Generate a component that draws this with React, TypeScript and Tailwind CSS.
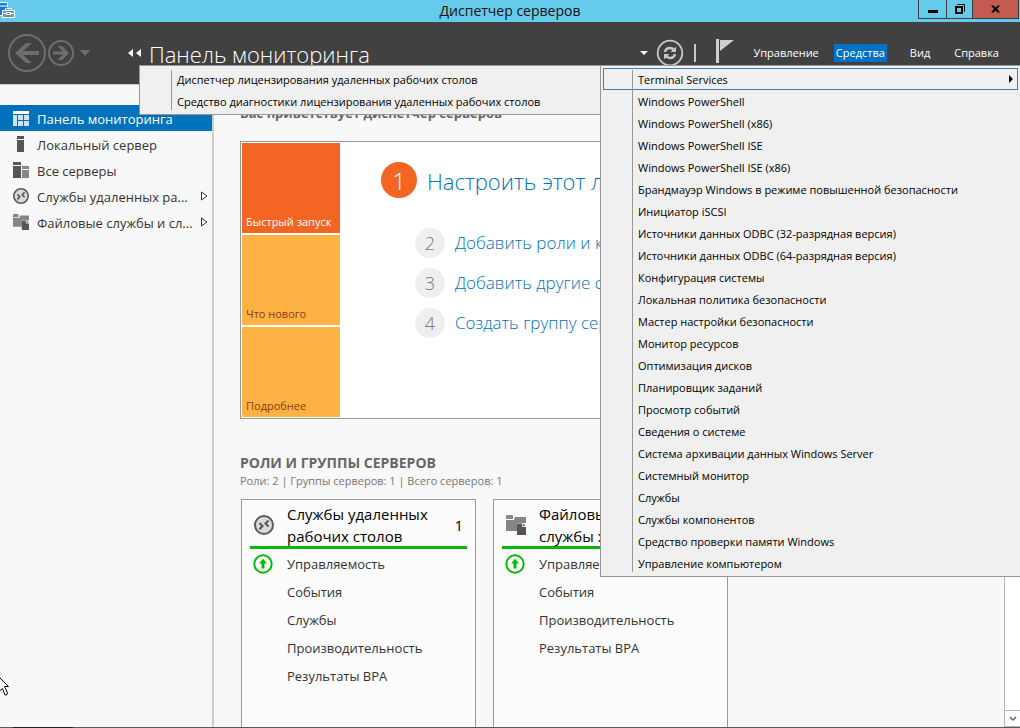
import type { ReactNode } from 'react'

const tools = [
  'Terminal Services',
  'Windows PowerShell',
  'Windows PowerShell (x86)',
  'Windows PowerShell ISE',
  'Windows PowerShell ISE (x86)',
  'Брандмауэр Windows в режиме повышенной безопасности',
  'Инициатор iSCSI',
  'Источники данных ODBC (32-разрядная версия)',
  'Источники данных ODBC (64-разрядная версия)',
  'Конфигурация системы',
  'Локальная политика безопасности',
  'Мастер настройки безопасности',
  'Монитор ресурсов',
  'Оптимизация дисков',
  'Планировщик заданий',
  'Просмотр событий',
  'Сведения о системе',
  'Система архивации данных Windows Server',
  'Системный монитор',
  'Службы',
  'Службы компонентов',
  'Средство проверки памяти Windows',
  'Управление компьютером',
]

const terminalServices = [
  'Диспетчер лицензирования удаленных рабочих столов',
  'Средство диагностики лицензирования удаленных рабочих столов',
]

function AppIcon() {
  return (
    <svg width="16" height="18" viewBox="0 0 16 18" className="block">
      <path d="M0 2h7v13H0z" fill="#1a7fd4" />
      <path d="M0 2.500h7.500v4.500M0 6h7M0 15.500h2" stroke="#fff" fill="none" />
      <path d="M2.500 10.500h12v7h-12z" fill="#6f93a8" stroke="#fff" />
      <path d="M5.500 10.500v-2h6v2M2.500 13.500h4m4 0h4M6.500 12.500h4v2h-4z" fill="none" stroke="#fff" />
    </svg>
  )
}

function DashboardIcon() {
  return (
    <svg width="16" height="15" viewBox="0 0 16 15">
      <path d="M0 0h16v3H0z" fill="#fff" />
      <path d="M0 4h4v11H0zM5 4h5v5H5zM11 4h5v5h-5zM5 10h5v5H5zM11 10h5v5h-5z" fill="#cfe3f3" />
    </svg>
  )
}

function ServerIcon() {
  return (
    <svg width="16" height="16" viewBox="0 0 16 16">
      <path d="M4 0h7v3H4zM4 4h7v12H4z" fill="#555" />
    </svg>
  )
}

function ServersIcon() {
  return (
    <svg width="16" height="16" viewBox="0 0 16 16">
      <path d="M0 0h8v3H0zM0 4h8v12H0z" fill="#555" />
      <path d="M9 4h7v3H9zM9 8h7v8H9z" fill="#858585" />
    </svg>
  )
}

function RemoteIcon({ size }: { size: number }) {
  return (
    <svg width={size} height={size} viewBox="0 0 20 20" className="shrink-0">
      <circle cx="10" cy="10" r="9" fill="#dadada" stroke="#5a5a5a" strokeWidth="2" />
      <path d="M5.500 8l3 3-3 3.200M14.500 5.500l-3 3 3 3" fill="none" stroke="#555" strokeWidth="2" />
    </svg>
  )
}

function FolderIcon({ size }: { size: number }) {
  return (
    <svg width={size} height={size} viewBox="0 0 20 20" className="shrink-0">
      <path d="M0 1l1-1h5l1 1v3H0z" fill="#858585" />
      <path d="M0 5h8l1-3h11v6h-9v8H0z" fill="#858585" />
      <path d="M11 8.500h6l3 3V20h-9z" fill="#555" />
      <path d="M16.500 8.500v3H20" fill="none" stroke="#eee" />
    </svg>
  )
}

function UpIcon() {
  return (
    <svg width="20" height="20" viewBox="0 0 20 20" className="shrink-0">
      <circle cx="10" cy="10" r="8.700" fill="#fff" stroke="#0b0" strokeWidth="2" />
      <path d="M10 4.800l4 4.700h-2.500v5h-3v-5H6z" fill="#0b0" />
    </svg>
  )
}

function TitleBar() {
  return (
    <div className="relative flex h-[22px] shrink-0 items-center justify-center bg-[#66caea] text-sm text-[#111]">
      <div className="absolute left-0 top-0">
        <AppIcon />
      </div>
      <h1>Диспетчер серверов</h1>
      <div className="absolute right-px top-0 flex h-[19px] border border-t-0 border-[#3c3c3c]">
        <button aria-label="Свернуть" className="flex w-7 items-center justify-center border-r border-[#3c3c3c]">
          <svg width="10" height="10" viewBox="0 0 10 10">
            <path d="M0 6h10v3H0z" />
          </svg>
        </button>
        <button aria-label="Восстановить" className="flex w-[26px] items-center justify-center border-r border-[#3c3c3c]">
          <svg width="10" height="10" viewBox="0 0 10 10">
            <path d="M2.500 .5h7v7" fill="none" stroke="#000" />
            <path d="M1 3h6v6H1z" fill="none" stroke="#000" strokeWidth="2" />
          </svg>
        </button>
        <button aria-label="Закрыть" className="flex w-[45px] items-center justify-center bg-[#c35b51]">
          <svg width="9" height="8" viewBox="0 0 10 8">
            <path d="M0 0h3l2 2.500L7 0h3L6.700 4 10 8H7L5 5.500 3 8H0l3.300-4z" />
          </svg>
        </button>
      </div>
    </div>
  )
}

function Header() {
  return (
    <header className="flex h-[63px] shrink-0 items-center border-b border-[#c8c8c8] bg-[#414141] pl-2 text-white">
      <button aria-label="Назад">
        <svg width="38" height="38" viewBox="0 0 38 38" fill="none" stroke="#6e6e6e">
          <circle cx="19" cy="19" r="18" strokeWidth="2" />
          <path d="M31 19H10" strokeWidth="4" />
          <path d="M7 19l11-10h6L13 19l11 10h-6z" fill="#6e6e6e" stroke="none" />
        </svg>
      </button>
      <button aria-label="Вперед" className="ml-0.5">
        <svg width="26" height="26" viewBox="0 0 26 26" fill="none" stroke="#6e6e6e">
          <circle cx="13" cy="13" r="12" strokeWidth="2" />
          <path d="M5 13h14" strokeWidth="3" />
          <path d="M21 13l-7 7h-4.500l7-7-7-7H14z" fill="#6e6e6e" stroke="none" />
        </svg>
      </button>
      <button aria-label="Журнал" className="ml-1.5">
        <svg width="10" height="6" viewBox="0 0 10 6">
          <path d="M0 0h10L5 6z" fill="#6e6e6e" />
        </svg>
      </button>
      <svg width="13" height="8" viewBox="0 0 13 8" className="ml-[38px]">
        <path d="M5 0v8L0 4zM13 0v8L8 4z" fill="#fff" />
      </svg>
      <h2 className="ml-2 pt-0.5 text-[22px] font-light whitespace-nowrap">Панель мониторинга</h2>

      <div className="ml-auto flex items-center">
        <svg width="8" height="4" viewBox="0 0 8 4">
          <path d="M0 0h8L4 4z" fill="#fff" />
        </svg>
        <button aria-label="Обновить" className="ml-2">
          <svg width="28" height="28" viewBox="0 0 28 28" fill="none" stroke="#c8c8c8">
            <circle cx="14" cy="14" r="12.300" strokeWidth="1.800" />
            <path d="M9 13c.5-2.500 2.500-4 5-4 1.500 0 3 .7 4 2M19 15c-.5 2.500-2.500 4-5 4-1.500 0-3-.7-4-2" strokeWidth="2.500" />
            <path d="M20 7.500V13h-5.500zM8 20.500V15h5.500z" fill="#c8c8c8" stroke="none" />
          </svg>
        </button>
        <div className="ml-2.5 h-[18px] w-0.5 bg-[#c8c8c8]" />
        <button aria-label="Уведомления" className="ml-5 pb-1">
          <svg width="18" height="24" viewBox="0 0 18 24" fill="#d0d0d0">
            <path d="M0 0h3v24H0zM4 1h14L4 12z" />
          </svg>
        </button>
        <nav className="ml-[18px] flex pr-5 text-[11px] leading-[18px]">
          <button className="px-px">Управление</button>
          <button className="ml-3.5 bg-[#0072c6] px-[2px]">Средства</button>
          <button className="ml-[22px] px-px">Вид</button>
          <button className="ml-[22px] px-px">Справка</button>
        </nav>
      </div>
    </header>
  )
}

function NavItem({ icon, label, active, more }: { icon: ReactNode; label: string; active?: boolean; more?: boolean }) {
  return (
    <a
      href="#"
      className={
        active
          ? 'flex h-[26px] items-center bg-[#0072bc] pl-[13px] text-white'
          : 'flex h-[26px] items-center pl-[13px] text-[#333]'
      }
    >
      {icon}
      <span className="ml-2 pt-[3px] whitespace-nowrap">{label}</span>
      {more && (
        <svg width="8" height="10" viewBox="0 0 8 10" className="mr-1 ml-auto shrink-0">
          <path d="M1.500 1v8L7 5z" fill="#fff" stroke="#333" />
        </svg>
      )}
    </a>
  )
}

function Sidebar() {
  return (
    <aside className="w-[214px] shrink-0 border-r-2 border-[#cfcfcf] pt-5 text-[13px]">
      <NavItem active icon={<DashboardIcon />} label="Панель мониторинга" />
      <NavItem icon={<ServerIcon />} label="Локальный сервер" />
      <NavItem icon={<ServersIcon />} label="Все серверы" />
      <NavItem more icon={<RemoteIcon size={16} />} label="Службы удаленных ра..." />
      <NavItem more icon={<FolderIcon size={16} />} label="Файловые службы и сл..." />
    </aside>
  )
}

function Step({ n, label }: { n: number; label: string }) {
  return (
    <li className="flex h-10 items-center">
      <span className="flex size-[30px] items-center justify-center rounded-full bg-[#efefef] text-lg font-light text-[#777]">
        {n}
      </span>
      <a href="#" className="ml-2.5 text-[17px] font-light whitespace-nowrap text-[#0072bc]">
        {label}
      </a>
    </li>
  )
}

function Welcome() {
  return (
    <section className="mt-[18px] flex border border-[#999] bg-white p-px">
      <div className="flex w-[98px] shrink-0 flex-col gap-0.5 text-[11px] leading-4">
        <button className="flex h-[90px] items-end bg-[#f26522] px-1 pb-[3px] whitespace-nowrap text-white">Быстрый запуск</button>
        <button className="flex h-[90px] items-end bg-[#ffb244] px-1 pb-[3px] text-[#8b3a0e]">Что нового</button>
        <button className="flex h-[90px] items-end bg-[#ffb244] px-1 pb-[3px] text-[#8b3a0e]">Подробнее</button>
      </div>
      <div className="pt-[19px] pl-[41px]">
        <div className="flex items-center">
          <span className="flex size-9 items-center justify-center rounded-full bg-[#f26522] pt-0.5 text-2xl font-light text-white">1</span>
          <a href="#" className="ml-2.5 pt-0.5 text-[22px] leading-8 font-light whitespace-nowrap text-[#0072bc]">
            Настроить этот локальный сервер
          </a>
        </div>
        <ol className="mt-[25px] pl-[34px]">
          <Step n={2} label="Добавить роли и компоненты" />
          <Step n={3} label="Добавить другие серверы" />
          <Step n={4} label="Создать группу серверов" />
        </ol>
      </div>
    </section>
  )
}

function RoleCard({ icon, title, count, rows }: { icon: ReactNode; title: ReactNode; count: number; rows: string[] }) {
  return (
    <article className="w-[235px] shrink-0 border border-b-0 border-[#999] bg-[#fcfcfc] px-2">
      <div className="flex h-[49px] items-center border-b-3 border-[#0b0] px-1 pt-[3px] text-[15px] leading-[22px] text-black">
        {icon}
        <h4 className="ml-[13px] whitespace-nowrap">{title}</h4>
        <span className="ml-auto">{count}</span>
      </div>
      <ul className="pt-px text-[13px] text-[#333]">
        {rows.map((row, i) => (
          <li key={row} className="flex h-7 items-center pl-[3px]">
            <span className="w-[34px]">{i === 0 && <UpIcon />}</span>
            <a href="#" className="pt-px">{row}</a>
          </li>
        ))}
      </ul>
    </article>
  )
}

function MenuItem({ label, open }: { label: string; open?: boolean }) {
  return (
    <button
      role="menuitem"
      className={
        open
          ? 'flex h-[22px] w-full items-center border border-[#3c7fb1] pr-1 pl-[34px] text-left'
          : 'flex h-[22px] w-full items-center pl-[35px] text-left'
      }
    >
      <span className="pt-px whitespace-nowrap">{label}</span>
      {open && (
        <svg width="4" height="8" viewBox="0 0 4 8" className="ml-auto">
          <path d="M0 0l4 4-4 4z" />
        </svg>
      )}
    </button>
  )
}

function Menu({ label, className, children }: { label: string; className: string; children: ReactNode }) {
  return (
    <div role="menu" aria-label={label} className={`relative border border-[#979797] bg-[#f0f0f0] p-0.5 ${className}`}>
      {children}
      <div className="pointer-events-none absolute inset-y-1 left-[31px] w-px bg-[#979797]" />
    </div>
  )
}

export default function App() {
  return (
    <div className="relative flex h-screen flex-col overflow-hidden bg-[#f8f8f8] font-['Open_Sans','Noto_Sans',sans-serif]">
      <TitleBar />
      <Header />
      <div className="flex min-h-0 flex-1">
        <Sidebar />
        <main className="min-w-0 flex-1 overflow-hidden pt-[18px] pl-[26px]">
          <h3 className="text-[13px] leading-5 font-bold text-[#666]">Вас приветствует диспетчер серверов</h3>
          <Welcome />
          <h3 className="mt-[34px] text-sm font-bold text-[#666]">РОЛИ И ГРУППЫ СЕРВЕРОВ</h3>
          <p className="text-[11px] leading-4 text-[#777]">Роли: 2 | Группы серверов: 1 | Всего серверов: 1</p>
          <div className="mt-2.5 ml-px flex h-screen gap-[17px]">
            <RoleCard
              icon={<RemoteIcon size={20} />}
              title={<>Службы удаленных<br />рабочих столов</>}
              count={1}
              rows={['Управляемость', 'События', 'Службы', 'Производительность', 'Результаты BPA']}
            />
            <RoleCard
              icon={<FolderIcon size={20} />}
              title={<>Файловые службы и<br />службы хранилища</>}
              count={1}
              rows={['Управляемость', 'События', 'Производительность', 'Результаты BPA']}
            />
          </div>
        </main>
        <div className="flex w-4 shrink-0 flex-col justify-end border-l border-[#b5b5b5] bg-white">
          <button aria-label="Прокрутить вниз" className="flex h-[17px] items-center justify-center border-y border-[#b5b5b5]">
            <svg width="8" height="6" viewBox="0 0 8 6">
              <path d="M1 1l3 3 3-3" fill="none" stroke="#666" strokeWidth="1.500" />
            </svg>
          </button>
        </div>
      </div>
      <div className="h-px shrink-0 bg-[#5a5a5a] pl-[13px]">
        <div className="h-px w-[60px] bg-[#222]" />
      </div>

      {/* Open "Tools" menu with its submenu on the left */}
      <div className="absolute top-[65px] right-0 flex items-start text-[11px] leading-4 text-black">
        <Menu label="Terminal Services" className="w-[461px] border-r-0">
          {terminalServices.map((item) => (
            <MenuItem key={item} label={item} />
          ))}
        </Menu>
        <Menu label="Средства" className="w-[420px] border-r-0">
          {tools.map((item, i) => (
            <MenuItem key={item} label={item} open={i === 0} />
          ))}
        </Menu>
      </div>

      {/* Mouse pointer */}
      <svg width="10" height="20" viewBox="0 0 10 20" className="absolute top-[677px] left-0">
        <path d="M-.5 .5L8.500 9.500H4.500L7.500 16l-1 2H5L2.500 11.500-.5 14z" fill="#fff" stroke="#000" />
      </svg>
    </div>
  )
}
